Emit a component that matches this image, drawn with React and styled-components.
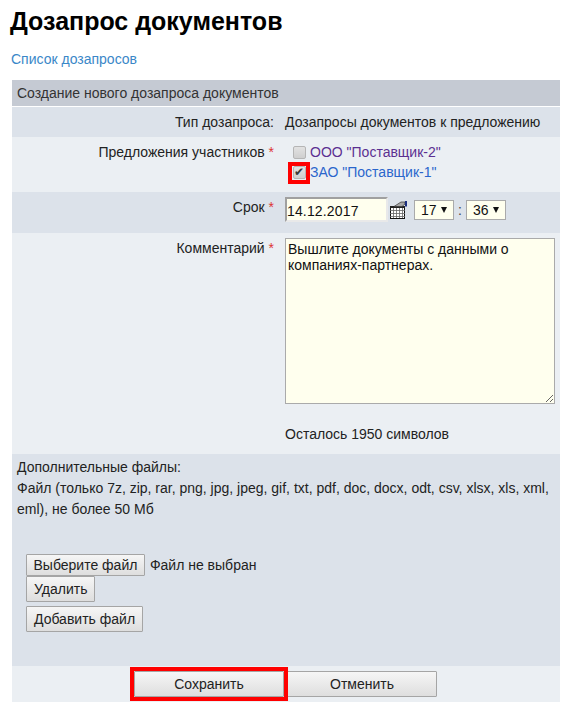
import styled, { createGlobalStyle } from 'styled-components';

const GlobalStyle = createGlobalStyle`
  html, body {
    margin: 0;
    background: #fff;
  }
  body {
    font-family: "Liberation Sans", Arial, sans-serif;
    font-size: 14px;
    color: #222;
  }
`

const Page = styled.div`
  width: 571px;
  height: 713px;
  overflow: hidden;
  padding: 0 8px 0 12px;
  box-sizing: border-box;
`
const Title = styled.h1`
  margin: 0 0 0 -2px;
  padding-top: 6px;
  height: 40px;
  box-sizing: border-box;
  font-size: 25px;
  line-height: 30px;
  font-weight: bold;
  color: #000;
`
const TopLink = styled.a`
  display: block;
  margin: 11px 0 0 -1px;
  height: 29px;
  line-height: 16px;
  color: #3a87c8;
  text-decoration: none;
`
const Form = styled.div`
  width: 548px;
`
const Header = styled.div`
  height: 26px;
  line-height: 26px;
  margin-bottom: 1px;
  padding-left: 5px;
  background: #c5cad3;
  color: #333;
`
const Row = styled.div`
  display: flex;
  height: ${p => p.$h}px;
  background: ${p => (p.$dark ? '#dce2ea' : '#ebeff3')};
  box-sizing: border-box;
`
const Label = styled.div`
  flex: 0 0 262px;
  text-align: right;
  padding-top: ${p => p.$top}px;
  line-height: 16px;
`
const Star = styled.span`
  color: #d33;
`
const Value = styled.div`
  margin-left: 11px;
  padding-top: ${p => p.$top}px;
  line-height: 16px;
  min-width: 0;
`
const CheckRow = styled.label`
  display: flex;
  align-items: center;
  height: 20px;
  position: relative;
`
const Check = styled.input.attrs({ type: 'checkbox' })`
  appearance: none;
  width: 13px;
  height: 13px;
  margin: 1px 4px 0 8px;
  border: 1px solid #b5b5b5;
  border-radius: 2px;
  background: linear-gradient(#e2e2e2, #cfcfcf);
  position: relative;
  &:checked::after {
    content: "✔";
    position: absolute;
    left: 0;
    top: -1px;
    font-size: 12px;
    line-height: 13px;
    color: #3a3a3a;
  }
`
const Offer = styled.a`
  color: ${p => (p.$visited ? '#5b2f91' : '#2a66cc')};
  text-decoration: none;
`
const Highlight = styled.span`
  position: absolute;
  left: 3px;
  top: 0;
  width: 22px;
  height: 22px;
  box-sizing: border-box;
  border: 4px solid #f00;
  pointer-events: none;
`
const DateRow = styled.div`
  display: flex;
  align-items: center;
`
const DateInput = styled.input`
  width: 103px;
  height: 25px;
  box-sizing: border-box;
  margin: 0;
  padding: 2px 0 0;
  border: 2px solid;
  border-color: #a0a0a0 #e9e9e9 #e9e9e9 #a0a0a0;
  background: #ffffee;
  font: 14px "Liberation Sans", Arial, sans-serif;
  letter-spacing: 0.15px;
  color: #111;
`
const CalendarIcon = styled.svg`
  width: 17px;
  height: 18px;
  margin: 1px 7px 0 2px;
`
const TimeSelect = styled.div`
  display: flex;
  align-items: center;
  justify-content: space-between;
  width: 40px;
  height: 20px;
  box-sizing: border-box;
  padding: 0 6px;
  border: 1px solid #aaa;
  background: #ffffee;
  color: #111;
`
const Arrow = styled.span`
  width: 0;
  height: 0;
  border-left: 3.5px solid transparent;
  border-right: 3.5px solid transparent;
  border-top: 6px solid #111;
`
const Colon = styled.span`
  margin: 0 4px;
  color: #444;
`
const Comment = styled.textarea`
  display: block;
  width: 270px;
  height: 166px;
  box-sizing: border-box;
  padding: 2px;
  margin: 0;
  border: 1px solid #aaa;
  background: #ffffee;
  font: 14px/16px "Liberation Sans", Arial, sans-serif;
  color: #111;
`
const Remaining = styled.div`
  margin-top: 22px;
  line-height: 16px;
`
const FilesBlock = styled.div`
  height: 212px;
  box-sizing: border-box;
  padding: 3px 5px 0;
  background: #dce2ea;
  line-height: 21px;
`
const FileButtons = styled.div`
  margin: 34px 0 0 9px;
  display: flex;
  flex-direction: column;
  align-items: flex-start;
`
const FileLine = styled.div`
  display: flex;
  align-items: center;
  gap: 5px;
`
const Btn = styled.button`
  height: ${p => p.$h || 26}px;
  padding: 0 ${p => p.$px || 7}px;
  margin-bottom: ${p => p.$mb || 0}px;
  border: 1px solid #a5a5a5;
  border-radius: 1px;
  background: linear-gradient(#f6f6f6, #dedede);
  font: 14px "Liberation Sans", Arial, sans-serif;
  color: #222;
`
const Actions = styled.div`
  height: 36px;
  background: #ebeff3;
  display: flex;
  gap: 3px;
  align-items: flex-start;
  padding: 5px 0 0 122px;
  box-sizing: border-box;
`
const WideBtn = styled(Btn)`
  width: 150px;
`
const ButtonMark = styled.span`
  position: absolute;
  inset: -4px;
  border: 4px solid #f00;
  pointer-events: none;
`
const SaveWrap = styled.div`
  position: relative;
  display: flex;
  z-index: 1;
`

function Calendar() {
  return (
    <CalendarIcon viewBox="0 0 17 18">
      <rect x="0.5" y="5.5" width="14" height="12" fill="#fff" stroke="#111" />
      <path d="M0 9.5h15M0 12.5h15M0 15.5h15M3.5 7v10M6.5 7v10M9.5 7v10M12.5 7v10" stroke="#666" strokeWidth="0.8" />
      <path d="M0 5h15v2H0z" fill="#222" />
      <path d="M4 5.5l7-4.5h4v2l-3 2.5z" fill="#a8a8a8" stroke="#333" strokeWidth="0.7" />
      <path d="M15 0h2v5.5h-2z" fill="#1c2f80" />
    </CalendarIcon>
  );
}

function App() {
  return (
    <Page>
      <GlobalStyle />
      <Title>Дозапрос документов</Title>
      <TopLink href="#">Список дозапросов</TopLink>
      <Form>
        <Header>Создание нового дозапроса документов</Header>
        <Row $dark $h={30}>
          <Label $top={7}>Тип дозапроса:</Label>
          <Value $top={7}>Дозапросы документов к предложению</Value>
        </Row>
        <Row $h={55}>
          <Label $top={7}>Предложения участников <Star>*</Star></Label>
          <Value $top={5}>
            <CheckRow>
              <Check />
              <Offer href="#" $visited>ООО "Поставщик-2"</Offer>
            </CheckRow>
            <CheckRow>
              <Check defaultChecked />
              <Offer href="#">ЗАО "Поставщик-1"</Offer>
              <Highlight />
            </CheckRow>
          </Value>
        </Row>
        <Row $dark $h={41}>
          <Label $top={7}>Срок <Star>*</Star></Label>
          <Value $top={5}>
            <DateRow>
              <DateInput defaultValue="14.12.2017" />
              <Calendar />
              <TimeSelect>17<Arrow /></TimeSelect>
              <Colon>:</Colon>
              <TimeSelect>36<Arrow /></TimeSelect>
            </DateRow>
          </Value>
        </Row>
        <Row $h={221}>
          <Label $top={7}>Комментарий <Star>*</Star></Label>
          <Value $top={5}>
            <Comment defaultValue="Вышлите документы с данными о компаниях-партнерах." />
            <Remaining>Осталось 1950 символов</Remaining>
          </Value>
        </Row>
        <FilesBlock>
          <div>Дополнительные файлы:</div>
          <div>Файл (только 7z, zip, rar, png, jpg, jpeg, gif, txt, pdf, doc, docx, odt, csv, xlsx, xls, xml, eml), не более 50 Мб</div>
          <FileButtons>
            <FileLine>
              <Btn $h={22} $px={6.5}>Выберите файл</Btn>
              <span>Файл не выбран</span>
            </FileLine>
            <Btn $mb={4}>Удалить</Btn>
            <Btn>Добавить файл</Btn>
          </FileButtons>
        </FilesBlock>
        <Actions>
          <SaveWrap>
            <WideBtn>Сохранить</WideBtn>
            <ButtonMark />
          </SaveWrap>
          <WideBtn>Отменить</WideBtn>
        </Actions>
      </Form>
    </Page>
  );
}

export default App
